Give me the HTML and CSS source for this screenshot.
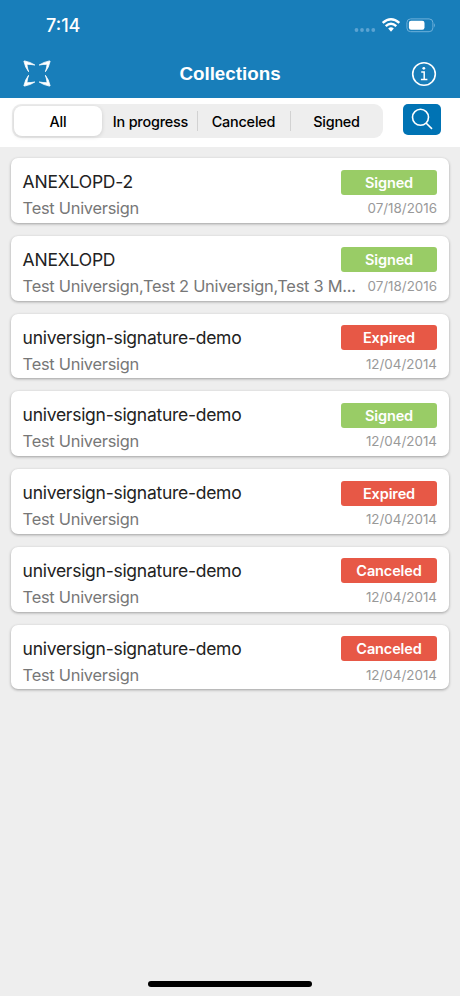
FILE: index.html
```html
<!DOCTYPE html>
<html lang="en">
<head>
<meta charset="utf-8">
<title>Collections</title>
<link rel="stylesheet" href="styles.css">
</head>
<body>
<div class="app">
  <header class="header">
    <div class="status">
      <span class="time">7:14</span>
      <svg class="status-icons" width="84" height="20" viewBox="0 0 84 20">
        <g fill="#5ba3d2"><circle cx="4.500" cy="14" r="1.900"/><circle cx="10" cy="14" r="1.900"/><circle cx="15.700" cy="14" r="1.900"/><circle cx="21.300" cy="14" r="1.900"/></g>
        <g fill="none" stroke="#fff" stroke-width="2.500"><path d="M30.700 6.900Q39 -.3 47.300 6.900"/><path d="M33.700 10.100Q39 5.500 44.300 10.100"/></g>
        <path d="M36.200 12.500Q39 10.200 41.800 12.500L39 15.700Z" fill="#fff"/>
        <rect x="54.900" y="2.900" width="26" height="12.800" rx="3.800" fill="none" stroke="#6eb0da"/>
        <rect x="56.900" y="4.800" width="15.600" height="9" rx="2.200" fill="#fff"/>
        <path d="M82 7.200q1.800 1.900 0 4.200z" fill="#6eb0da"/>
      </svg>
    </div>
    <div class="nav">
      <svg class="logo" width="28" height="28" viewBox="0 0 28 28">
        <g fill="#fff" stroke="#fff" stroke-width=".8" stroke-linejoin="round">
          <path id="corner" d="M.9 1.300Q1 .9 1.600 .9Q7.500 2.100 11.800 5Q8 4.300 3.900 4.300Q4.200 8 5.600 11.700Q2.200 7.500 .9 1.300Z"/>
          <use href="#corner" transform="translate(28 0) scale(-1 1)"/>
          <use href="#corner" transform="translate(0 27) scale(1 -1)"/>
          <use href="#corner" transform="translate(28 27) scale(-1 -1)"/>
        </g>
      </svg>
      <h1 class="title">Collections</h1>
      <svg class="info" width="26" height="26" viewBox="0 0 26 26" fill="none" stroke="#fff">
        <circle cx="13" cy="13" r="11.300" stroke-width="1.600"/>
        <path d="M10.200 10.900H13.200V18.200M9.900 18.500H16.400" stroke-width="1.500"/>
        <circle cx="12.800" cy="7.300" r="1.400" fill="#fff" stroke="none"/>
      </svg>
    </div>
  </header>
  <div class="toolbar">
    <div class="segments">
      <span class="segment active">All</span>
      <span class="segment">In progress</span>
      <span class="segment divided">Canceled</span>
      <span class="segment divided">Signed</span>
    </div>
    <div class="search">
      <svg width="24" height="24" viewBox="0 0 24 24" fill="none" stroke="#fff" stroke-width="1.600"><circle cx="10.500" cy="10.300" r="8"/><path d="M16 16L22 21.800"/></svg>
    </div>
  </div>
  <main class="list">
    <article class="card"><div class="row"><h2 class="name caps">ANEXLOPD-2</h2><span class="badge signed">Signed</span></div><div class="row"><p class="people">Test Universign</p><time class="date">07/18/2016</time></div></article>
    <article class="card"><div class="row"><h2 class="name caps">ANEXLOPD</h2><span class="badge signed">Signed</span></div><div class="row"><p class="people">Test Universign,Test 2 Universign,Test 3 M...</p><time class="date">07/18/2016</time></div></article>
    <article class="card"><div class="row"><h2 class="name">universign-signature-demo</h2><span class="badge expired">Expired</span></div><div class="row"><p class="people">Test Universign</p><time class="date">12/04/2014</time></div></article>
    <article class="card"><div class="row"><h2 class="name">universign-signature-demo</h2><span class="badge signed">Signed</span></div><div class="row"><p class="people">Test Universign</p><time class="date">12/04/2014</time></div></article>
    <article class="card"><div class="row"><h2 class="name">universign-signature-demo</h2><span class="badge expired">Expired</span></div><div class="row"><p class="people">Test Universign</p><time class="date">12/04/2014</time></div></article>
    <article class="card"><div class="row"><h2 class="name">universign-signature-demo</h2><span class="badge canceled">Canceled</span></div><div class="row"><p class="people">Test Universign</p><time class="date">12/04/2014</time></div></article>
    <article class="card"><div class="row"><h2 class="name">universign-signature-demo</h2><span class="badge canceled">Canceled</span></div><div class="row"><p class="people">Test Universign</p><time class="date">12/04/2014</time></div></article>
  </main>
  <div class="home"></div>
</div>
</body>
</html>
```
FILE: styles.css
```css
* { box-sizing: border-box; }
body { margin: 0; font-family: Inter, "Liberation Sans", sans-serif; }
h1, h2, p { margin: 0; font-weight: 400; }
svg { display: block; }
.app { display: flex; flex-direction: column; width: 460px; height: 996px; background: #eee; overflow: hidden; }
.header { height: 98px; background: #187eba; color: #fff; }
.status { display: flex; justify-content: space-between; height: 50px; padding: 16px 24px 0 46px; }
.time { font-size: 18px; line-height: 20px; font-weight: 500; }
.status-icons { width: 84px; }
.nav { display: grid; grid-template-columns: 28px 1fr 26px; align-items: center; height: 48px; padding: 0 23px; }
.title { padding-right: 2px; font: 700 18.8px/24px "Liberation Sans", sans-serif; text-align: center; }
.toolbar { display: flex; justify-content: space-between; height: 49px; padding: 6px 19px 0 12px; background: #fff; }
.segments { display: grid; grid-template-columns: 92px 93px 93px 93px; width: 371px; height: 34px; border-radius: 9px; background: #eee; }
.segment { display: flex; align-items: center; justify-content: center; padding-top: 1px; font-size: 14.4px; font-weight: 500; letter-spacing: -.2px; color: #000; white-space: nowrap; }
.active { margin: 2px; border-radius: 8px; background: #fff; box-shadow: 0 1px 4px #0002; }
.divided { background: linear-gradient(#d2d2d2, #d2d2d2) 0 50% / 1px 20px no-repeat; }
.search { display: grid; place-items: center; width: 38px; height: 31px; margin-top: -.5px; border-radius: 5px; background: #0073b4; }
.search svg { margin-right: 1px; }
.list { display: flex; flex-direction: column; gap: 13px; padding: 11px 11px 0; }
.card { height: 64.75px; padding: 11px 12px 0 11.6px; border-radius: 7px; background: #fff; box-shadow: 0 1px 3px #0005; }
.row { display: flex; justify-content: space-between; align-items: center; height: 26px; }
.name { font-size: 17.5px; line-height: 26px; letter-spacing: -.27px; color: #222; }
.caps { letter-spacing: -.2px; }
.people { font-size: 16.4px; line-height: 26px; letter-spacing: -.26px; color: #777; white-space: nowrap; }
.date { font-size: 13.4px; color: #999; }
.badge { width: 96px; height: 25px; border-radius: 3px; color: #fff; font-size: 14.5px; line-height: 25px; font-weight: 600; letter-spacing: -.12px; text-align: center; }
.signed { background: #9c6; }
.expired, .canceled { background: #e75846; }
.home { align-self: center; width: 164px; height: 6px; margin-top: auto; margin-bottom: 9px; border-radius: 3px; background: #000; }
```
